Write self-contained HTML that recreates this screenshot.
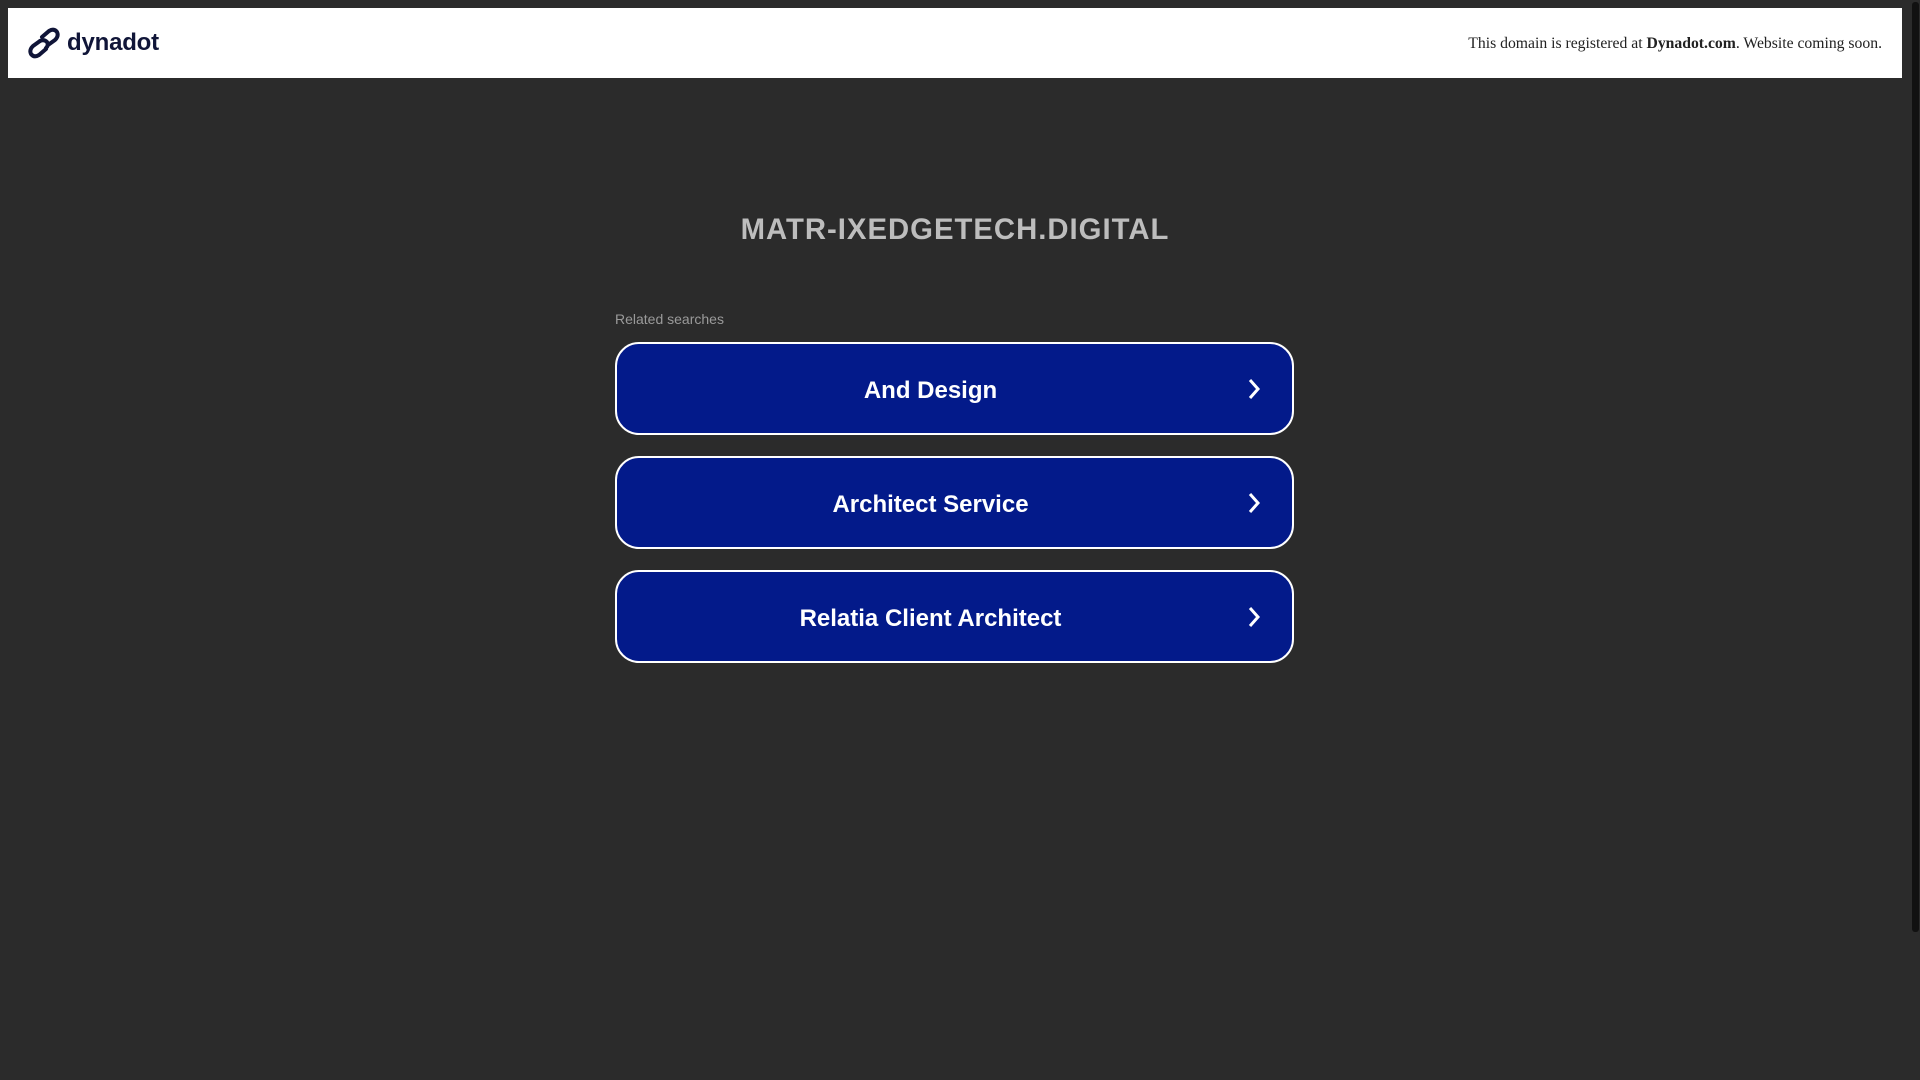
<!DOCTYPE html>
<html><head><style>
html,body{margin:0;padding:0;}
body{width:1920px;height:1080px;background:#2b2b2b;position:relative;overflow:hidden;font-family:"Liberation Sans",Arial,sans-serif;}
.top{position:absolute;left:8px;top:8px;width:1894px;height:70px;background:#fff;}
.logo{position:absolute;left:20px;top:19px;display:flex;align-items:center;}
.logo span{font-weight:bold;font-size:24px;color:#101538;margin-left:7px;letter-spacing:-0.2px;}
.note{position:absolute;right:20px;top:27px;font-family:"Liberation Serif",serif;font-size:15.7px;color:#222;}
.sb{position:absolute;left:1911px;top:0;width:9px;height:1080px;background:#2b2b2b;}
.sb div{position:absolute;left:1px;top:2px;width:7px;height:930px;background:#111;border-radius:3px;}
h1{position:absolute;left:0;width:1910px;top:213px;margin:0;text-align:center;font-size:29.3px;font-weight:bold;color:#bdbdbd;letter-spacing:1px;}
.rel{position:absolute;left:615px;top:311px;font-size:14px;color:#9a9a9a;}
.btn{position:absolute;left:615px;width:675px;height:89px;border:2px solid #fff;border-radius:24px;background:#031a8a;color:#fff;font-weight:bold;font-size:24px;display:flex;align-items:center;justify-content:center;}
.btn b{position:relative;left:-24px;top:2px;}
.btn svg{position:absolute;right:31px;top:34px;}
</style></head><body>
<div class="top">
 <div class="logo">
  <svg width="32" height="32" viewBox="0 0 32 32" fill="none" stroke="#101538" stroke-width="4" stroke-linecap="round">
   <path d="M14 10 L21 4 Q26 1 29 5 Q31 9 27 13 L20 18"/>
   <path d="M18 22 L11 28 Q6 31 3 27 Q1 23 5 19 L12 14"/>
   <path d="M12 14 Q16 12 19 15 Q21 18 18 21"/>
  </svg>
  <span>dynadot</span>
 </div>
 <div class="note">This domain is registered at <b>Dynadot.com</b>. Website coming soon.</div>
</div>
<div class="sb"><div></div></div>
<h1>MATR-IXEDGETECH.DIGITAL</h1>
<div class="rel">Related searches</div>
<div class="btn" style="top:342px"><b>And Design</b><svg width="14" height="22" viewBox="0 0 14 22"><path d="M3 2 L11 11 L3 20" stroke="#fff" stroke-width="3" fill="none"/></svg></div>
<div class="btn" style="top:456px"><b>Architect Service</b><svg width="14" height="22" viewBox="0 0 14 22"><path d="M3 2 L11 11 L3 20" stroke="#fff" stroke-width="3" fill="none"/></svg></div>
<div class="btn" style="top:570px"><b>Relatia Client Architect</b><svg width="14" height="22" viewBox="0 0 14 22"><path d="M3 2 L11 11 L3 20" stroke="#fff" stroke-width="3" fill="none"/></svg></div>
</body></html>
